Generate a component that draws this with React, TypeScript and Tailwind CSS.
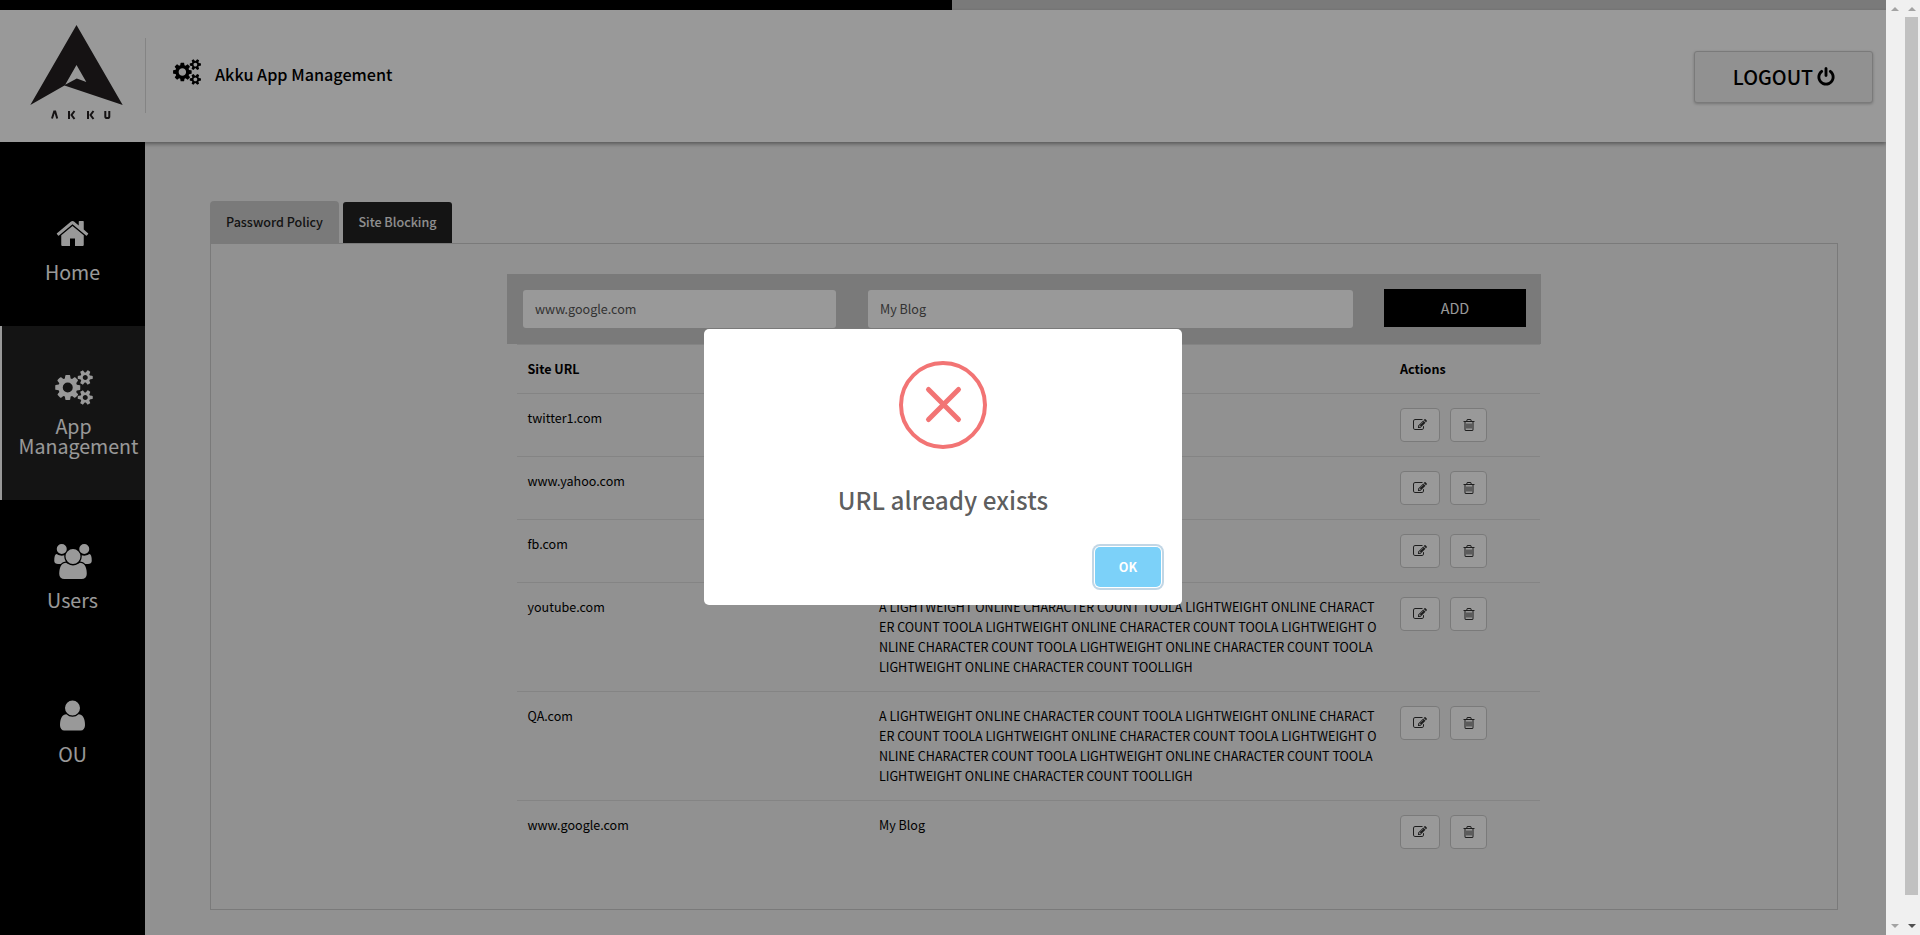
import React from "react";

const LONG_TEXT = [
  "A LIGHTWEIGHT ONLINE CHARACTER COUNT TOOLA LIGHTWEIGHT ONLINE CHARACT",
  "ER COUNT TOOLA LIGHTWEIGHT ONLINE CHARACTER COUNT TOOLA LIGHTWEIGHT O",
  "NLINE CHARACTER COUNT TOOLA LIGHTWEIGHT ONLINE CHARACTER COUNT TOOLA",
  "LIGHTWEIGHT ONLINE CHARACTER COUNT TOOLLIGH",
];

const ROWS: { url: string; lines: string[] }[] = [
  { url: "twitter1.com", lines: [] },
  { url: "www.yahoo.com", lines: [] },
  { url: "fb.com", lines: [] },
  { url: "youtube.com", lines: LONG_TEXT },
  { url: "QA.com", lines: LONG_TEXT },
  { url: "www.google.com", lines: ["My Blog"] },
];

type IconProps = { className: string };

const CogsIcon = ({ className }: IconProps) => (
  <svg viewBox="-64 0 1920 1792" fill="currentColor" className={className}>
    <path d="M832 896q0-106-75-181t-181-75-181 75-75 181 75 181 181 75 181-75 75-181zm768 512q0-52-38-90t-90-38-90 38-38 90q0 53 37.5 90.5t90.5 37.5 90.5-37.5 37.5-90.5zm0-1024q0-52-38-90t-90-38-90 38-38 90q0 53 37.5 90.5t90.5 37.5 90.5-37.5 37.5-90.5zm-384 421v185q0 10-7 19.5t-16 10.5l-155 24q-11 35-32 76 34 48 90 115 7 11 7 20 0 12-7 19-23 30-82.5 89.5t-78.5 59.5q-11 0-21-7l-115-90q-37 19-77 31-11 108-23 155-7 24-30 24h-186q-11 0-20-7.5t-10-17.5l-23-153q-34-10-75-31l-118 89q-7 7-20 7-11 0-21-8-144-133-144-160 0-9 7-19 10-14 41-53t47-61q-23-44-35-82l-152-24q-10-1-17-9.5t-7-19.5v-185q0-10 7-19.5t16-10.5l155-24q11-35 32-76-34-48-90-115-7-11-7-20 0-12 7-20 22-30 82-89t79-59q11 0 21 7l115 90q34-18 77-32 11-108 23-154 7-24 30-24h186q11 0 20 7.5t10 17.5l23 153q34 10 75 31l118-89q8-7 20-7 11 0 21 8 144 133 144 160 0 8-7 19-12 16-42 54t-45 60q23 48 34 82l152 23q10 2 17 10.5t7 19.5zm640 533v140q0 16-149 31-12 27-30 52 51 113 51 138 0 4-4 7-122 71-124 71-8 0-46-47t-52-68q-20 2-30 2t-30-2q-14 21-52 68t-46 47q-2 0-124-71-4-3-4-7 0-25 51-138-18-25-30-52-149-15-149-31v-140q0-16 149-31 13-29 30-52-51-113-51-138 0-4 4-7 4-2 35-20t59-34 30-16q8 0 46 46.5t52 67.5q20-2 30-2t30 2q51-71 92-112l6-2q4 0 124 70 4 3 4 7 0 25-51 138 17 23 30 52 149 15 149 31zm0-1024v140q0 16-149 31-12 27-30 52 51 113 51 138 0 4-4 7-122 71-124 71-8 0-46-47t-52-68q-20 2-30 2t-30-2q-14 21-52 68t-46 47q-2 0-124-71-4-3-4-7 0-25 51-138-18-25-30-52-149-15-149-31v-140q0-16 149-31 13-29 30-52-51-113-51-138 0-4 4-7 4-2 35-20t59-34 30-16q8 0 46 46.5t52 67.5q20-2 30-2t30 2q51-71 92-112l6-2q4 0 124 70 4 3 4 7 0 25-51 138 17 23 30 52 149 15 149 31z" />
  </svg>
);

const HomeIcon = ({ className }: IconProps) => (
  <svg viewBox="0 0 1792 1792" fill="currentColor" className={className}>
    <path d="M1472 992v480q0 26-19 45t-45 19h-384v-384h-256v384h-384q-26 0-45-19t-19-45v-480q0-1 .5-3t.5-3l575-474 575 474q1 2 1 6zm223-69l-62 74q-8 9-21 11h-3q-13 0-21-7l-692-577-692 577q-12 8-24 7-13-2-21-11l-62-74q-8-10-7-23.5t11-21.5l719-599q32-26 76-26t76 26l244 204v-195q0-14 9-23t23-9h192q14 0 23 9t9 23v408l219 182q10 8 11 21.5t-7 23.5z" />
  </svg>
);

const GroupIcon = ({ className }: IconProps) => (
  <svg viewBox="0 0 1920 1792" fill="currentColor" className={className}>
    <path d="M593 896q-162 5-265 128h-134q-82 0-138-40.5t-56-118.5q0-353 124-353 6 0 43.5 21t97.5 42.5 119 21.5q67 0 133-23-5 37-5 66 0 139 81 256zm1071 637q0 120-73 189.5t-194 69.5h-874q-121 0-194-69.5t-73-189.5q0-53 3.5-103.5t14-109 26.5-108.5 43-97.5 62-81 85.5-53.5 111.5-20q10 0 43 21.5t73 48 107 48 135 21.5 135-21.5 107-48 73-48 43-21.5q61 0 111.5 20t85.5 53.5 62 81 43 97.5 26.5 108.5 14 109 3.5 103.5zm-1024-1277q0 106-75 181t-181 75-181-75-75-181 75-181 181-75 181 75 75 181zm704 384q0 159-112.5 271.5t-271.5 112.5-271.5-112.5-112.5-271.5 112.5-271.5 271.5-112.5 271.5 112.5 112.5 271.5zm576 225q0 78-56 118.5t-138 40.5h-134q-103-123-265-128 81-117 81-256 0-29-5-66 66 23 133 23 59 0 119-21.5t97.5-42.5 43.5-21q124 0 124 353zm-128-609q0 106-75 181t-181 75-181-75-75-181 75-181 181-75 181 75 75 181z" />
  </svg>
);

const UserIcon = ({ className }: IconProps) => (
  <svg viewBox="0 0 1792 1792" fill="currentColor" className={className}>
    <path d="M1536 1399q0 109-62.5 187t-150.5 78h-854q-88 0-150.5-78t-62.5-187q0-85 8.5-160.5t31.5-152 58.5-131 94-89 134.5-34.5q131 128 313 128t313-128q76 0 134.5 34.5t94 89 58.5 131 31.5 152 8.5 160.5zm-256-887q0 159-112.5 271.5t-271.5 112.5-271.5-112.5-112.5-271.5 112.5-271.5 271.5-112.5 271.5 112.5 112.5 271.5z" />
  </svg>
);

const EditIcon = ({ className }: IconProps) => (
  <svg viewBox="0 0 1792 1792" fill="currentColor" className={className}>
    <path d="M888 1184l116-116-152-152-116 116v56h96v96h56zm440-720q-16-16-33 1l-350 350q-17 17-1 33t33-1l350-350q17-17 1-33zm80 594v190q0 119-84.5 203.5t-203.5 84.5h-832q-119 0-203.5-84.5t-84.5-203.5v-832q0-119 84.5-203.5t203.5-84.5h832q63 0 117 25 15 7 18 23 3 17-9 29l-49 49q-14 14-32 8-23-6-45-6h-832q-66 0-113 47t-47 113v832q0 66 47 113t113 47h832q66 0 113-47t47-113v-126q0-13 9-22l64-64q15-15 35-7t20 29zm-96-738l288 288-672 672h-288v-288zm444 132l-92 92-288-288 92-92q28-28 68-28t68 28l152 152q28 28 28 68t-28 68z" />
  </svg>
);

const TrashIcon = ({ className }: IconProps) => (
  <svg viewBox="0 0 1792 1792" fill="currentColor" className={className}>
    <path d="M704 736v576q0 14-9 23t-23 9h-64q-14 0-23-9t-9-23v-576q0-14 9-23t23-9h64q14 0 23 9t9 23zm256 0v576q0 14-9 23t-23 9h-64q-14 0-23-9t-9-23v-576q0-14 9-23t23-9h64q14 0 23 9t9 23zm256 0v576q0 14-9 23t-23 9h-64q-14 0-23-9t-9-23v-576q0-14 9-23t23-9h64q14 0 23 9t9 23zm128 724v-948h-896v948q0 22 7 40.5t14.5 27 10.5 8.5h832q3 0 10.5-8.5t14.5-27 7-40.5zm-672-1076h448l-48-117q-7-9-17-11h-317q-10 2-17 11zm928 32v64q0 14-9 23t-23 9h-96v948q0 83-47 143.5t-113 60.5h-832q-66 0-113-58.5t-47-141.5v-952h-96q-14 0-23-9t-9-23v-64q0-14 9-23t23-9h309l70-167q15-37 54-63t79-26h320q40 0 79 26t54 63l70 167h309q14 0 23 9t9 23z" />
  </svg>
);

const PowerIcon = ({ className }: IconProps) => (
  <svg viewBox="0 0 1792 1792" fill="currentColor" className={className}>
    <path d="M1664 896q0 156-61 298t-164 245-245 164-298 61-298-61-245-164-164-245-61-298q0-182 80.5-343t226.5-270q43-32 95.5-25t83.5 50q32 42 24.5 94.5t-49.5 84.5q-98 74-151.5 181t-53.5 228q0 104 40.5 198.5t109.5 163.5 163.5 109.5 198.5 40.5 198.5-40.5 163.5-109.5 109.5-163.5 40.5-198.5q0-121-53.5-228t-151.5-181q-42-32-49.5-84.5t24.5-94.5q31-43 84-50t95 25q146 109 226.5 270t80.5 343zm-640-768v640q0 52-38 90t-90 38-90-38-38-90v-640q0-52 38-90t90-38 90 38 38 90z" />
  </svg>
);

function Logo() {
  return (
    <svg viewBox="0 0 93 95" className="h-[95px] w-[93px]">
      <path fill="#231f20" d="M46.5 0 92.7 80 34.5 60.5 0.3 80Z" />
      <path fill="#fff" d="M46.5 40 56.3 57 46.8 53.6 35.2 59.8Z" />
      <g fill="none" stroke="#231f20" strokeWidth="2">
        <path d="M22 93.5 24.2 86.5h1L27.2 93.5" />
        <path d="M39 86v8M44.5 86 41.5 90l3 4" />
        <path d="M58 86v8M63.5 86 60.5 90l3 4" />
        <path d="M75.3 86v5.5q0 1.6 2 1.6t2-1.6V86" />
      </g>
    </svg>
  );
}

function Header() {
  return (
    <header className="relative z-10 flex h-[132px] shrink-0 items-start bg-white shadow-[0_2px_4px_rgba(0,0,0,0.4)]">
      <div className="ml-[30px] mt-[15px] shrink-0">
        <Logo />
      </div>
      <div className="ml-[22px] mt-[28px] h-[75px] w-px bg-[#ddd]" />
      <CogsIcon className="ml-[27px] mt-[49px] h-[26px] w-[28px]" />
      <h1 className="ml-[14px] mt-[52px] whitespace-nowrap text-[16.2px] leading-6 font-medium text-black">
        Akku App Management
      </h1>
      <button className="ml-auto mr-[13px] mt-[41px] flex h-[52px] w-[179px] items-center justify-center gap-[3px] rounded-[3px] border border-[#ccc] bg-[#f2f2f2] pl-[2px] text-[19.7px] font-medium text-black shadow-[0_1px_3px_rgba(0,0,0,0.25)]">
        <span>LOGOUT</span>
        <PowerIcon className="h-5 w-5" />
      </button>
    </header>
  );
}

function Sidebar() {
  return (
    <nav className="flex w-[145px] shrink-0 flex-col bg-black text-center text-[19.6px] leading-5 text-white">
      <div className="flex h-[184px] flex-col items-center pt-[74px]">
        <HomeIcon className="h-[35px] w-[35px]" />
        <span className="mt-[11px]">Home</span>
      </div>
      <div className="flex h-[174px] flex-col items-center border-l-2 border-white bg-[#222] pt-[44px]">
        <CogsIcon className="h-[35px] w-[38px]" />
        <span className="mt-[11px]">App</span>
        <span className="ml-[10px]">Management</span>
      </div>
      <div className="flex h-[154px] flex-col items-center pt-[44px]">
        <GroupIcon className="h-[35px] w-[38px]" />
        <span className="mt-[11px]">Users</span>
      </div>
      <div className="flex flex-col items-center pt-[44px]">
        <UserIcon className="h-[35px] w-[35px]" />
        <span className="mt-[11px]">OU</span>
      </div>
    </nav>
  );
}

function Tabs() {
  return (
    <div className="flex items-end gap-1 text-[12.55px] font-medium">
      <div className="flex h-[42px] w-[129px] items-center justify-center rounded-t-[4px] bg-[#ccc] text-[#222]">
        Password Policy
      </div>
      <div className="flex h-[41px] w-[109px] items-center justify-center rounded-t-[3px] bg-[#222] text-[#eee]">
        Site Blocking
      </div>
    </div>
  );
}

function AddForm() {
  return (
    <div className="flex h-[70px] w-[1034px] items-start bg-[#ccc] pl-4 pt-4 text-[12.55px] text-[#555]">
      <div className="flex h-[38px] w-[313px] items-center rounded-[3px] bg-white pl-3">www.google.com</div>
      <div className="ml-8 flex h-[38px] w-[485px] items-center rounded-[3px] bg-white pl-3">My Blog</div>
      <button className="-mt-px ml-[31px] h-[38px] w-[142px] bg-black text-[14.4px] text-white">ADD</button>
    </div>
  );
}

function SiteTable() {
  return (
    <div className="ml-[10px] w-[1023px] text-[12.54px] leading-5 text-black">
      <div className="flex h-[49px] items-start border-t border-[#ddd] pl-[10.5px] pt-[14px] font-bold">
        <div className="w-[872.5px]">Site URL</div>
        <div>Actions</div>
      </div>
      {ROWS.map((row) => (
        <div key={row.url} className="flex items-start border-t border-[#ddd] pb-[14px] pl-[10.5px] pt-[14px]">
          <div className="w-[351.5px]">{row.url}</div>
          <div className="w-[521px]">
            {row.lines.map((line, i) => (
              <div key={i} className="whitespace-nowrap">
                {line}
              </div>
            ))}
          </div>
          <div className="flex gap-[10px] text-[#333]">
            <button className="flex h-[34px] w-10 items-center justify-center rounded-[4px] border border-[#ccc] bg-white">
              <EditIcon className="h-[14px] w-[14px]" />
            </button>
            <button className="flex h-[34px] w-[37px] items-center justify-center rounded-[4px] border border-[#ccc] bg-white">
              <TrashIcon className="h-[14px] w-[14px]" />
            </button>
          </div>
        </div>
      ))}
    </div>
  );
}

function AlertDialog() {
  return (
    <div className="absolute inset-0 z-20 bg-black/40">
      <div className="absolute left-[704px] top-[329px] flex h-[276px] w-[478px] flex-col items-center rounded-[5px] bg-white">
        <div className="mt-[32px] flex h-[88px] w-[88px] items-center justify-center rounded-full border-4 border-[#f27474]">
          <svg viewBox="0 0 80 80" className="h-20 w-20 shrink-0">
            <path d="M25.5 24.5 55.5 54.5M55.5 24.5 25.5 54.5" stroke="#f27474" strokeWidth="5" strokeLinecap="round" />
          </svg>
        </div>
        <div className="mt-[33px] text-[24.3px] leading-[36px] font-medium text-black/65">URL already exists</div>
        <button className="mr-[21px] mt-[29px] flex h-10 w-[66px] items-center justify-center self-end rounded-[5px] bg-[#7cd1f9] text-[12.6px] font-bold text-white shadow-[0_0_0_1px_#fff,0_0_0_3px_rgba(43,114,165,0.29)]">
          OK
        </button>
      </div>
    </div>
  );
}

function ScrollArrow({ className }: IconProps) {
  return (
    <svg viewBox="0 0 8 4" className={className} fill="currentColor">
      <path d="M4 0 8 4H0Z" />
    </svg>
  );
}

function Scrollbars() {
  return (
    <div className="flex w-[34px] shrink-0 bg-[#f0f0f0] text-[#a3a3a3]">
      <div className="flex w-[17px] flex-col items-center justify-between py-[7px]">
        <ScrollArrow className="h-1 w-2" />
        <ScrollArrow className="h-1 w-2 rotate-180" />
      </div>
      <div className="flex w-[17px] flex-col items-center py-[7px]">
        <ScrollArrow className="h-1 w-2" />
        <div className="mt-[6px] h-[878px] w-[13px] bg-[#c1c1c1]" />
        <ScrollArrow className="mt-auto h-1 w-2 rotate-180 text-[#505050]" />
      </div>
    </div>
  );
}

export default function App() {
  return (
    <div className="flex h-[935px] w-[1920px] overflow-hidden font-['Noto_Sans_CJK_SC',sans-serif]">
      <div className="relative flex w-[1886px] shrink-0 flex-col overflow-hidden bg-[#f2f2f2]">
        <div className="relative z-10 flex h-[10px] shrink-0 bg-[#ccc]">
          <div className="w-[952px] bg-black" />
        </div>
        <Header />
        <div className="flex min-h-0 flex-1">
          <Sidebar />
          <main className="pl-[65px] pt-[59px]">
            <Tabs />
            <section className="h-[667px] w-[1628px] border border-[#ccc] pl-[296px] pt-[30px]">
              <AddForm />
              <SiteTable />
            </section>
          </main>
        </div>
        <AlertDialog />
      </div>
      <Scrollbars />
    </div>
  );
}
